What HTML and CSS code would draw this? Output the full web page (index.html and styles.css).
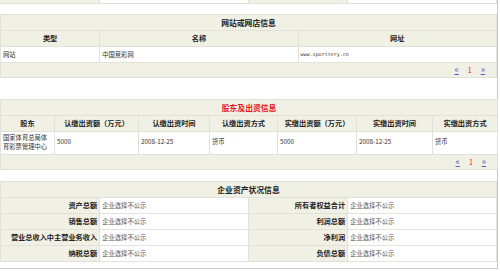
FILE: index.html
```html
<!DOCTYPE html>
<html lang="zh-CN">
<head>
  <meta charset="UTF-8" />
  <title>企业信息</title>
  <link rel="stylesheet" href="styles.css">
</head>
<body>
  <div class="wrap">
    <table class="info prev">
      <colgroup><col class="w20"><col class="w30"><col class="w20"><col class="w30"></colgroup>
      <tr><td class="label"></td><td></td><td class="label"></td><td></td></tr>
    </table>

    <table class="info web">
      <colgroup><col class="w20"><col class="w40"><col class="w40"></colgroup>
      <tr class="title"><th colspan="3">网站或网店信息</th></tr>
      <tr class="head"><th>类型</th><th>名称</th><th>网址</th></tr>
      <tr class="data"><td>网站</td><td>中国竞彩网</td><td class="url">www.sporttery.cn</td></tr>
      <tr class="pager"><td colspan="3"><a href="#">&laquo;</a><span class="cur">1</span><a href="#">&raquo;</a></td></tr>
    </table>

    <table class="info holders">
      <colgroup>
        <col class="c1"><col class="c2"><col class="c3"><col class="c4">
        <col class="c5"><col class="c6"><col class="c7">
      </colgroup>
      <tr class="title"><th colspan="7" class="red">股东及出资信息</th></tr>
      <tr class="head">
        <th>股东</th><th>认缴出资额（万元）</th><th>认缴出资时间</th><th>认缴出资方式</th>
        <th>实缴出资额（万元）</th><th>实缴出资时间</th><th>实缴出资方式</th>
      </tr>
      <tr class="data tall">
        <td>国家体育总局体育彩票管理中心</td><td>5000</td><td>2008-12-25</td><td>货币</td>
        <td>5000</td><td>2008-12-25</td><td>货币</td>
      </tr>
      <tr class="pager"><td colspan="7"><a href="#">&laquo;</a><span class="cur">1</span><a href="#">&raquo;</a></td></tr>
    </table>

    <table class="info assets">
      <colgroup><col class="w20"><col class="w30"><col class="w20"><col class="w30"></colgroup>
      <tr class="title"><th colspan="4">企业资产状况信息</th></tr>
      <tr><td class="label">资产总额</td><td class="val">企业选择不公示</td><td class="label">所有者权益合计</td><td class="val">企业选择不公示</td></tr>
      <tr><td class="label">销售总额</td><td class="val">企业选择不公示</td><td class="label">利润总额</td><td class="val">企业选择不公示</td></tr>
      <tr><td class="label">营业总收入中主营业务收入</td><td class="val">企业选择不公示</td><td class="label">净利润</td><td class="val">企业选择不公示</td></tr>
      <tr><td class="label">纳税总额</td><td class="val">企业选择不公示</td><td class="label">负债总额</td><td class="val">企业选择不公示</td></tr>
    </table>
  </div>
</body>
</html>
```

FILE: styles.css
```css
* {
  box-sizing: border-box;
}

html, body {
  margin: 0;
  padding: 0;
  background: #fff;
  font-family: "Noto Sans CJK SC", "DejaVu Sans", sans-serif;
  color: #333;
}

.wrap {
  width: 498px;
  height: 270px;
  border-right: 1px solid #c8c8c8;
  border-bottom: 1px solid #c8c8c8;
}

.info {
  width: 497px;
  table-layout: fixed;
  border-collapse: collapse;
}

.info td, .info th {
  border: 1px solid #e2e2da;
  padding: 0 2px;
  font-size: 6.3px;
  line-height: 9px;
  white-space: normal;
  overflow: hidden;
}

.w20 { width: 20%; }
.w30 { width: 30%; }
.w40 { width: 40%; }

.c1 { width: 54px; }
.c2 { width: 84px; }
.c3 { width: 71px; }
.c4 { width: 68px; }
.c5 { width: 79px; }
.c6 { width: 76px; }
.c7 { width: 65px; }

.prev {
  margin-top: -1px;
}

.prev td {
  height: 4px;
  border-top: none;
  border-left: none;
}

.web {
  margin-top: 10px;
}

.holders {
  margin-top: 21px;
}

.assets {
  margin-top: 11px;
}

.title th {
  background: #f1f0e4;
  height: 16px;
  font-size: 7.8px;
  font-weight: bold;
  color: #222;
  text-align: center;
}

.title th.red {
  color: #e8141b;
}

.head th {
  background: #f1f0e4;
  height: 16px;
  font-size: 7.2px;
  font-weight: bold;
  color: #222;
  text-align: center;
}

.data td {
  background: #fff;
  height: 16px;
  text-align: left;
}

.data.tall td {
  height: 23px;
  line-height: 8.5px;
}

.url {
  font-family: "DejaVu Sans Mono", monospace;
  font-size: 5px !important;
}

.pager td {
  background: #f1f0e4;
  height: 15px;
  text-align: right;
  padding-right: 11px;
  font-size: 9px;
}

.pager a {
  color: #5a5ac8;
  text-decoration: underline;
}

.pager .cur {
  color: #e8141b;
  font-size: 7px;
  margin: 0 9px;
}

.label {
  background: #f1f0e4;
  text-align: right;
  font-weight: bold;
  color: #222;
  font-size: 7.2px !important;
}

.val {
  background: #fff;
  color: #555;
}

.assets td {
  height: 16px;
}
```
